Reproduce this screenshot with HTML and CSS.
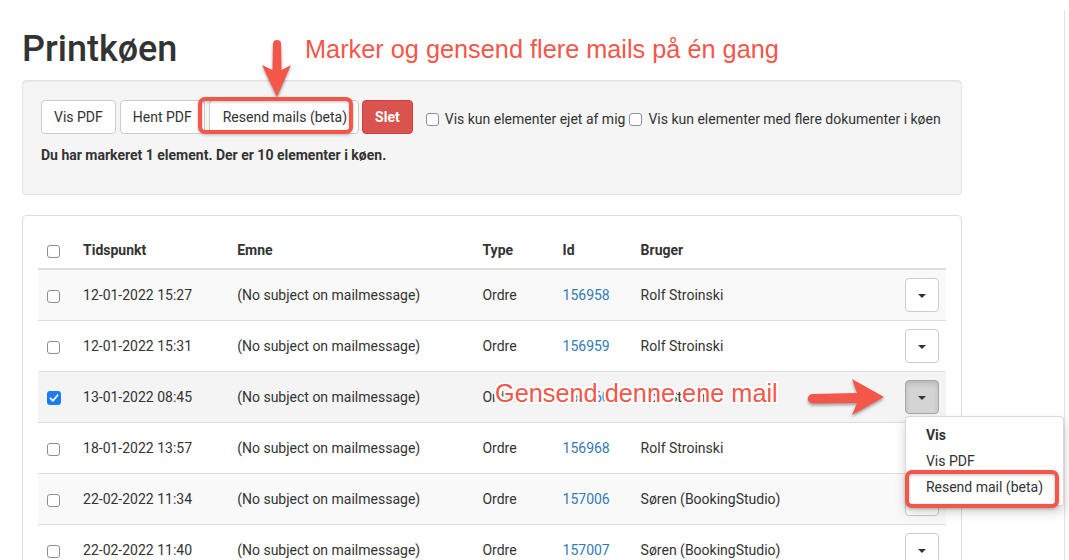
FILE: index.html
```html
<!DOCTYPE html>
<html lang="da">
<head>
    <meta charset="UTF-8">
    <title>Printkøen</title>
    <link rel="stylesheet" href="styles.css">
</head>
<body>
<div class="page">
    <div class="main">
        <h1 class="title">Printkøen</h1>

        <div class="well">
            <div class="toolbar">
                <button class="btn">Vis PDF</button>
                <button class="btn">Hent PDF</button>
                <button class="btn btn-resend">Resend mails (beta)</button>
                <button class="btn btn-danger">Slet</button>
                <label class="check first"><span class="cb"></span>Vis kun elementer ejet af mig</label>
                <label class="check"><span class="cb"></span>Vis kun elementer med flere dokumenter i køen</label>
            </div>
            <p class="status">Du har markeret 1 element. Der er 10 elementer i køen.</p>
        </div>

        <div class="panel">
            <table class="queue">
                <colgroup>
                    <col class="c-check"><col class="c-time"><col class="c-subject">
                    <col class="c-type"><col class="c-id"><col class="c-user"><col class="c-act">
                </colgroup>
                <thead>
                    <tr>
                        <th><span class="cb"></span></th>
                        <th>Tidspunkt</th>
                        <th>Emne</th>
                        <th>Type</th>
                        <th>Id</th>
                        <th>Bruger</th>
                        <th></th>
                    </tr>
                </thead>
                <tbody>
                    <tr>
                        <td><span class="cb"></span></td>
                        <td>12-01-2022 15:27</td>
                        <td>(No subject on mailmessage)</td>
                        <td>Ordre</td>
                        <td><a href="#">156958</a></td>
                        <td>Rolf Stroinski</td>
                        <td><div class="btn-group"><button class="toggle"><span class="caret"></span></button></div></td>
                    </tr>
                    <tr>
                        <td><span class="cb"></span></td>
                        <td>12-01-2022 15:31</td>
                        <td>(No subject on mailmessage)</td>
                        <td>Ordre</td>
                        <td><a href="#">156959</a></td>
                        <td>Rolf Stroinski</td>
                        <td><div class="btn-group"><button class="toggle"><span class="caret"></span></button></div></td>
                    </tr>
                    <tr class="active">
                        <td><span class="cb checked"><svg viewBox="0 0 14 14" width="14" height="14"><path d="M3.5 7.3 L6 9.8 L10.6 4.2" fill="none" stroke="#fff" stroke-width="1.8" stroke-linecap="round" stroke-linejoin="round"/></svg></span></td>
                        <td>13-01-2022 08:45</td>
                        <td>(No subject on mailmessage)</td>
                        <td>Ordre</td>
                        <td><a href="#">156960</a></td>
                        <td>Rolf Stroinski</td>
                        <td>
                            <div class="btn-group open">
                                <button class="toggle"><span class="caret"></span></button>
                                <ul class="menu">
                                    <li class="menu-head">Vis</li>
                                    <li>Vis PDF</li>
                                    <li>Resend mail (beta)</li>
                                </ul>
                            </div>
                        </td>
                    </tr>
                    <tr>
                        <td><span class="cb"></span></td>
                        <td>18-01-2022 13:57</td>
                        <td>(No subject on mailmessage)</td>
                        <td>Ordre</td>
                        <td><a href="#">156968</a></td>
                        <td>Rolf Stroinski</td>
                        <td><div class="btn-group"><button class="toggle"><span class="caret"></span></button></div></td>
                    </tr>
                    <tr>
                        <td><span class="cb"></span></td>
                        <td>22-02-2022 11:34</td>
                        <td>(No subject on mailmessage)</td>
                        <td>Ordre</td>
                        <td><a href="#">157006</a></td>
                        <td>Søren (BookingStudio)</td>
                        <td><div class="btn-group"><button class="toggle"><span class="caret"></span></button></div></td>
                    </tr>
                    <tr>
                        <td><span class="cb"></span></td>
                        <td>22-02-2022 11:40</td>
                        <td>(No subject on mailmessage)</td>
                        <td>Ordre</td>
                        <td><a href="#">157007</a></td>
                        <td>Søren (BookingStudio)</td>
                        <td><div class="btn-group"><button class="toggle"><span class="caret"></span></button></div></td>
                    </tr>
                    <tr>
                        <td><span class="cb"></span></td>
                        <td>22-02-2022 11:52</td>
                        <td>(No subject on mailmessage)</td>
                        <td>Ordre</td>
                        <td><a href="#">157008</a></td>
                        <td>Søren (BookingStudio)</td>
                        <td><div class="btn-group"><button class="toggle"><span class="caret"></span></button></div></td>
                    </tr>
                </tbody>
            </table>
        </div>
    </div>
    <div class="side"></div>

    <!-- annotations drawn on top of the screenshot -->
    <div class="notes">
        <svg class="marks" width="1069" height="560" viewBox="0 0 1069 560">
            <g class="arrow">
                <path d="M273 44 A4 4 0 0 1 281 44 L281.5 70 L291 65 L277 97 L262 65 L272.5 70 Z"/>
                <path d="M812.5 394 L857 393 L852 379 L884 397 L852 415 L857 403 L812.5 403.5 A4.75 4.75 0 0 1 812.5 394 Z"/>
            </g>
            <g class="box">
                <rect x="200" y="99" width="151" height="33" rx="5"/>
                <rect x="907" y="472" width="150" height="34" rx="5"/>
            </g>
        </svg>
        <div class="note note-top">Marker og gensend flere mails på én gang</div>
        <div class="note note-row">Gensend denne ene mail</div>
    </div>
</div>
</body>
</html>
```

FILE: styles.css
```css
body {
    margin: 0;
    font-family: Roboto, "Liberation Sans", Arial, sans-serif;
    font-size: 14px;
    line-height: 20px;
    color: #333;
    background: #fff;
}
.page {
    display: flex;
    position: relative;
    min-height: 560px;
}
.main {
    width: 1064px;
    flex-shrink: 0;
    padding-left: 22px;
    box-sizing: border-box;
}
.side {
    flex: 1;
    margin-top: 10px;
    border-left: 1px solid #e4e4e4;
    background: #fcfcfc;
}

.title {
    margin: 29px 0 11px;
    font-size: 36px;
    line-height: 40px;
    font-weight: 500;
    color: #333;
}

/* filter well */
.well {
    width: 940px;
    box-sizing: border-box;
    padding: 19px 18px;
    margin-bottom: 20px;
    background-color: #f5f5f5;
    border: 1px solid #e3e3e3;
    border-radius: 4px;
    box-shadow: inset 0 1px 1px rgba(0, 0, 0, .05);
}
.toolbar {
    display: flex;
    align-items: center;
    gap: 4px;
    height: 34px;
}
.btn {
    height: 34px;
    padding: 6px 12px;
    font-family: inherit;
    font-size: 14px;
    line-height: 20px;
    color: #333;
    background-color: #fff;
    border: 1px solid #ccc;
    border-radius: 4px;
    white-space: nowrap;
}
.btn-resend {
    padding-left: 13px;
    padding-right: 11px;
}
.btn-danger {
    margin-left: -1px;
    font-weight: 700;
    color: #fff;
    background-color: #d9534f;
    border-color: #d43f3a;
}
.check {
    display: flex;
    align-items: center;
    padding-top: 4px;
    white-space: nowrap;
}
.check.first {
    margin-left: 9px;
}
.check .cb {
    margin-right: 6px;
}
.status {
    margin: 11px 0 10px;
    font-size: 14px;
    font-weight: 700;
}

/* checkboxes */
.cb {
    display: inline-block;
    width: 13px;
    height: 13px;
    box-sizing: border-box;
    border: 1px solid #8d8d96;
    border-radius: 3px;
    background: #fff;
    vertical-align: middle;
    flex-shrink: 0;
}
.cb.checked {
    width: 14px;
    height: 14px;
    border: none;
    background: #1a7cf4;
}
.cb svg {
    display: block;
}

/* table panel */
.panel {
    width: 940px;
    box-sizing: border-box;
    padding: 15px;
    border: 1px solid #ddd;
    border-radius: 4px;
}
.queue {
    width: 100%;
    table-layout: fixed;
    border-collapse: collapse;
}
.c-check { width: 37px; }
.c-time { width: 154px; }
.c-subject { width: 245px; }
.c-type { width: 80px; }
.c-id { width: 78px; }
.c-user { width: 264px; }
.c-act { width: 49px; }

.queue th {
    padding: 9px 8px 8px;
    text-align: left;
    font-weight: 700;
    border-bottom: 2px solid #ddd;
    vertical-align: bottom;
}
.queue td {
    padding: 8px;
    vertical-align: middle;
    border-top: 1px solid #ddd;
    white-space: nowrap;
}
.queue th .cb,
.queue td .cb {
    margin-left: 1px;
}
.queue tbody tr:nth-child(odd) {
    background-color: #f9f9f9;
}
.queue tbody tr.active {
    background-color: #f4f4f4;
}
.queue a {
    color: #337ab7;
    text-decoration: none;
}

.btn-group {
    position: relative;
    width: 34px;
}
.toggle {
    display: block;
    width: 34px;
    height: 34px;
    padding: 0;
    background: #fff;
    border: 1px solid #ccc;
    border-radius: 4px;
}
.caret {
    display: inline-block;
    width: 0;
    height: 0;
    border-top: 4px solid #333;
    border-left: 4px solid transparent;
    border-right: 4px solid transparent;
    vertical-align: middle;
}
.open .toggle {
    background-color: #d4d4d4;
    border-color: #a6a6a6;
    box-shadow: inset 0 3px 5px rgba(0, 0, 0, .125);
}
.menu {
    position: absolute;
    top: 100%;
    left: 0;
    z-index: 5;
    min-width: 159px;
    margin: 2px 0 0;
    padding: 5px 0;
    list-style: none;
    background: #fff;
    border: 1px solid rgba(0, 0, 0, .15);
    border-radius: 4px;
    box-shadow: 0 6px 12px rgba(0, 0, 0, .175);
    box-sizing: border-box;
}
.menu li {
    padding: 3px 20px;
    line-height: 20px;
    white-space: nowrap;
}
.menu .menu-head {
    font-weight: 700;
}

/* annotation layer */
.notes {
    position: absolute;
    top: 0;
    left: 0;
    width: 1069px;
    height: 560px;
    pointer-events: none;
    z-index: 10;
}
.marks {
    position: absolute;
    top: 0;
    left: 0;
}
.arrow path {
    fill: #f5564a;
    filter: drop-shadow(0 2px 1.5px rgba(0, 0, 0, .35));
}
.box rect {
    fill: none;
    stroke: #f5564a;
    stroke-width: 4;
    filter: drop-shadow(0 1px 1.5px rgba(0, 0, 0, .25));
}
.note {
    position: absolute;
    font-family: "Liberation Sans", Arial, sans-serif;
    font-size: 25.3px;
    line-height: 25px;
    color: #f5564a;
    white-space: nowrap;
}
.note-top {
    left: 305px;
    top: 37px;
}
.note-row {
    left: 495px;
    top: 381px;
    text-shadow:
        -2px -2px 0 #fff, 2px -2px 0 #fff, -2px 2px 0 #fff, 2px 2px 0 #fff,
        0 -2px 0 #fff, 0 2px 0 #fff, -2px 0 0 #fff, 2px 0 0 #fff,
        0 0 4px rgba(0, 0, 0, .25);
}
```
